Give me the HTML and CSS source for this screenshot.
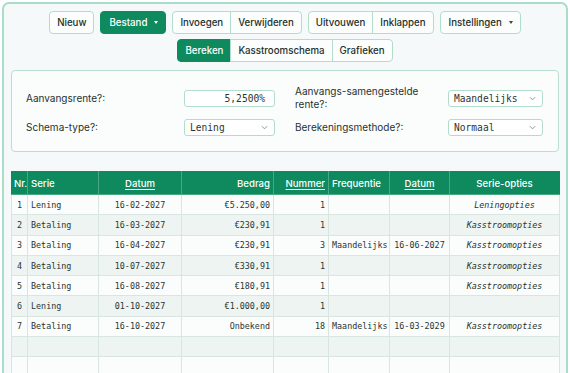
FILE: index.html
```html
<!DOCTYPE html>
<html lang="nl">
<head>
<meta charset="utf-8">
<title>Leningcalculator</title>
<link rel="stylesheet" href="styles.css">
</head>
<body>
<div class="app">
  <div class="toolbar">
    <div class="tb-row">
      <button class="btn">Nieuw</button>
      <button class="btn btn-primary has-caret">Bestand <span class="caret"></span></button>
      <div class="btn-group">
        <button class="btn">Invoegen</button>
        <button class="btn">Verwijderen</button>
      </div>
      <div class="btn-group">
        <button class="btn">Uitvouwen</button>
        <button class="btn">Inklappen</button>
      </div>
      <button class="btn has-caret">Instellingen <span class="caret dark"></span></button>
    </div>
    <div class="tb-row">
      <div class="btn-group">
        <button class="btn btn-primary">Bereken</button>
        <button class="btn">Kasstroomschema</button>
        <button class="btn">Grafieken</button>
      </div>
    </div>
  </div>

  <div class="form-panel">
    <div class="field">
      <label class="label">Aanvangsrente?:</label>
      <div class="control input">5,2500%</div>
    </div>
    <div class="field wide">
      <label class="label">Aanvangs-samengestelde<br>rente?:</label>
      <div class="control select">Maandelijks<svg class="chev" viewBox="0 0 8 5"><path d="M1 1 L4 4 L7 1"/></svg></div>
    </div>
    <div class="field">
      <label class="label">Schema-type?:</label>
      <div class="control select">Lening<svg class="chev" viewBox="0 0 8 5"><path d="M1 1 L4 4 L7 1"/></svg></div>
    </div>
    <div class="field wide">
      <label class="label">Berekeningsmethode?:</label>
      <div class="control select">Normaal<svg class="chev" viewBox="0 0 8 5"><path d="M1 1 L4 4 L7 1"/></svg></div>
    </div>
  </div>

  <table class="grid">
    <colgroup>
      <col class="c-nr"><col class="c-serie"><col class="c-datum"><col class="c-bedrag">
      <col class="c-nummer"><col class="c-freq"><col class="c-datum2"><col class="c-opties">
    </colgroup>
    <thead>
      <tr>
        <th class="l">Nr.</th>
        <th class="l">Serie</th>
        <th class="c"><span class="sort">Datum</span></th>
        <th class="r">Bedrag</th>
        <th class="r"><span class="sort">Nummer</span></th>
        <th class="l">Frequentie</th>
        <th class="c"><span class="sort">Datum</span></th>
        <th class="c">Serie-opties</th>
      </tr>
    </thead>
    <tbody>
      <tr><td class="c">1</td><td>Lening</td><td class="c">16-02-2027</td><td class="r">€5.250,00</td><td class="r">1</td><td></td><td class="c"></td><td class="c i">Leningopties</td></tr>
      <tr><td class="c">2</td><td>Betaling</td><td class="c">16-03-2027</td><td class="r">€230,91</td><td class="r">1</td><td></td><td class="c"></td><td class="c i">Kasstroomopties</td></tr>
      <tr><td class="c">3</td><td>Betaling</td><td class="c">16-04-2027</td><td class="r">€230,91</td><td class="r">3</td><td>Maandelijks</td><td class="c">16-06-2027</td><td class="c i">Kasstroomopties</td></tr>
      <tr><td class="c">4</td><td>Betaling</td><td class="c">10-07-2027</td><td class="r">€330,91</td><td class="r">1</td><td></td><td class="c"></td><td class="c i">Kasstroomopties</td></tr>
      <tr><td class="c">5</td><td>Betaling</td><td class="c">16-08-2027</td><td class="r">€180,91</td><td class="r">1</td><td></td><td class="c"></td><td class="c i">Kasstroomopties</td></tr>
      <tr><td class="c">6</td><td>Lening</td><td class="c">01-10-2027</td><td class="r">€1.000,00</td><td class="r">1</td><td></td><td class="c"></td><td class="c i"></td></tr>
      <tr><td class="c">7</td><td>Betaling</td><td class="c">16-10-2027</td><td class="r">Onbekend</td><td class="r">18</td><td>Maandelijks</td><td class="c">16-03-2029</td><td class="c i">Kasstroomopties</td></tr>
      <tr><td></td><td></td><td></td><td></td><td></td><td></td><td></td><td></td></tr>
      <tr><td></td><td></td><td></td><td></td><td></td><td></td><td></td><td></td></tr>
      <tr><td></td><td></td><td></td><td></td><td></td><td></td><td></td><td></td></tr>
    </tbody>
  </table>
</div>
</body>
</html>
```
FILE: styles.css
```css
html, body {
  margin: 0;
  padding: 0;
  overflow: hidden;
  background: #ffffff;
}
body {
  font-family: Inter, "Noto Sans", sans-serif;
  color: #1e2826;
}
.app {
  margin: 2px 2px 0 2px;
  height: 400px;
  border: 2px solid #a9dcc9;
  border-bottom: none;
  border-radius: 7px 7px 0 0;
  background: #f6f9fa;
  padding: 7px 7px 0 7px;
}

/* toolbar */
.toolbar {
  display: flex;
  flex-direction: column;
  align-items: center;
  gap: 5px;
}
.tb-row {
  display: flex;
  gap: 6px;
}
.btn {
  font-family: Inter, "Noto Sans", sans-serif;
  font-size: 9.7px;
  font-weight: 500;
  color: #23302c;
  height: 23px;
  line-height: 21px;
  padding: 0 7px;
  border: 1px solid #b2dccc;
  border-radius: 4px;
  background: #fcfefd;
  display: inline-flex;
  align-items: center;
  gap: 7px;
  cursor: pointer;
}
.btn.has-caret {
  padding: 0 6px 0 8px;
}
.btn-primary {
  background: #0f8a5e;
  border-color: #0f8a5e;
  color: #ffffff;
}
.btn-group {
  display: flex;
}
.btn-group .btn {
  border-radius: 0;
}
.btn-group .btn + .btn {
  margin-left: -1px;
}
.btn-group .btn:first-child {
  border-radius: 4px 0 0 4px;
}
.btn-group .btn:last-child {
  border-radius: 0 4px 4px 0;
}
.caret {
  width: 0;
  height: 0;
  border-left: 2.5px solid transparent;
  border-right: 2.5px solid transparent;
  border-top: 3px solid #ffffff;
  margin-right: 1px;
}
.caret.dark {
  border-top-color: #3a4743;
}

/* form */
.form-panel {
  margin-top: 8px;
  border: 1px solid #b9dfd1;
  border-radius: 4px;
  background: #fbfcfc;
  padding: 14px 15px 15px 14px;
  display: grid;
  grid-template-columns: 249px 248px;
  column-gap: 20px;
  row-gap: 8px;
  align-items: center;
}
.field {
  display: grid;
  grid-template-columns: 1fr 91px;
  align-items: center;
}
.field.wide {
  grid-template-columns: 1fr 95px;
}
.label {
  font-size: 10px;
  line-height: 13px;
  color: #27322f;
}
.control {
  height: 17px;
  box-sizing: border-box;
  border: 1px solid #b2dccc;
  border-radius: 3px;
  background: #ffffff;
  font-family: "DejaVu Sans Mono", monospace;
  font-size: 9.6px;
  line-height: 15px;
  color: #2b3532;
  padding: 0 5px;
  display: flex;
  align-items: center;
}
.input {
  justify-content: flex-end;
  padding-right: 9px;
}
.select {
  justify-content: space-between;
  padding-right: 6px;
}
.chev {
  width: 7px;
  height: 5px;
  fill: none;
  stroke: #7d8a86;
  stroke-width: 1;
}

/* table */
.grid {
  margin-top: 19px;
  width: 548px;
  table-layout: fixed;
  border-collapse: collapse;
  font-size: 8.4px;
}
.c-nr { width: 16px; }
.c-serie { width: 71px; }
.c-datum { width: 83px; }
.c-bedrag { width: 92px; }
.c-nummer { width: 55px; }
.c-freq { width: 61px; }
.c-datum2 { width: 60px; }
.c-opties { width: 110px; }
.grid th {
  background: #0f8a5e;
  color: #ffffff;
  font-family: Inter, "Noto Sans", sans-serif;
  font-size: 9.6px;
  font-weight: 500;
  height: 22px;
  padding: 0 3px;
  border: 1px solid #48a882;
  border-top-color: #0f8a5e;
  white-space: nowrap;
  overflow: hidden;
}
.grid th:first-child { border-left-color: #0f8a5e; padding: 0 2px; }
.grid th:last-child { border-right-color: #0f8a5e; }
.sort {
  text-decoration: underline;
  text-underline-offset: 1.5px;
}
.grid td {
  font-family: "DejaVu Sans Mono", monospace;
  font-size: 8.4px;
  color: #2a3431;
  height: 20.3px;
  box-sizing: border-box;
  padding: 0 3px;
  border: 1px solid #d8e5e0;
  white-space: nowrap;
  overflow: hidden;
}
.grid tbody tr:nth-child(odd) td { background: #fbfdfc; }
.grid tbody tr:nth-child(even) td { background: #edf4f1; }
.l { text-align: left; }
.c { text-align: center; }
.r { text-align: right; }
.i { font-style: italic; }
```
